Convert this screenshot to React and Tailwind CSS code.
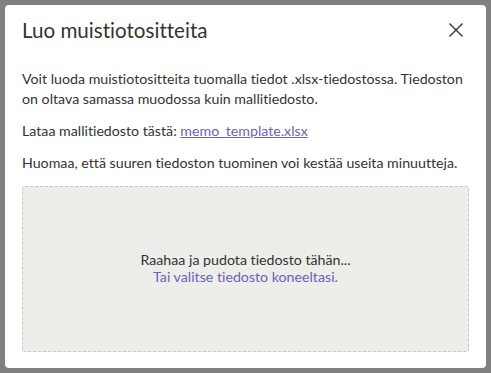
export default function App() {
  return (
    <div className="w-[491px] h-[373px] bg-[#808080] p-[5px] overflow-hidden [font-variant-ligatures:none]" style={{ fontFamily: '"Lato", "Noto Sans", sans-serif' }}>
      <div className="bg-white rounded-[4px] w-[481px] h-[363px] px-[17px] pt-[9px] flex flex-col text-[#333333]">
        <div className="flex items-center justify-between h-[32px]">
          <h1 className="text-[20.6px] leading-none">Luo muistiotositteita</h1>
          <button className="w-[24px] h-[24px] flex items-center justify-center mr-[1px]">
            <svg width="16" height="16" viewBox="0 0 16 16" fill="none" stroke="#333" strokeWidth="1.4">
              <path d="M1.5 1.5 L14.5 14.5 M14.5 1.5 L1.5 14.5" />
            </svg>
          </button>
        </div>
        <p className="text-[14.2px] leading-[20px] mt-[23px]">
          Voit luoda muistiotositteita tuomalla tiedot .xlsx-tiedostossa. Tiedoston on oltava samassa muodossa kuin mallitiedosto.
        </p>
        <p className="text-[14.2px] leading-[20px] mt-[12px]">
          Lataa mallitiedosto tästä: <a href="#" className="text-[#6b63b5] underline">memo_template.xlsx</a>
        </p>
        <p className="text-[14.2px] leading-[20px] mt-[12px]">
          Huomaa, että suuren tiedoston tuominen voi kestää useita minuutteja.
        </p>
        <div className="mt-[13px] h-[166px] bg-[#ededea] border border-dashed border-[#c8c8c8] rounded-[3px] flex flex-col items-center justify-center text-[14.2px] leading-[17px]">
          <div className="-mt-[2px]">Raahaa ja pudota tiedosto tähän...</div>
          <div className="text-[#6b63b5]">Tai valitse tiedosto koneeltasi.</div>
        </div>
      </div>
    </div>
  );
}
